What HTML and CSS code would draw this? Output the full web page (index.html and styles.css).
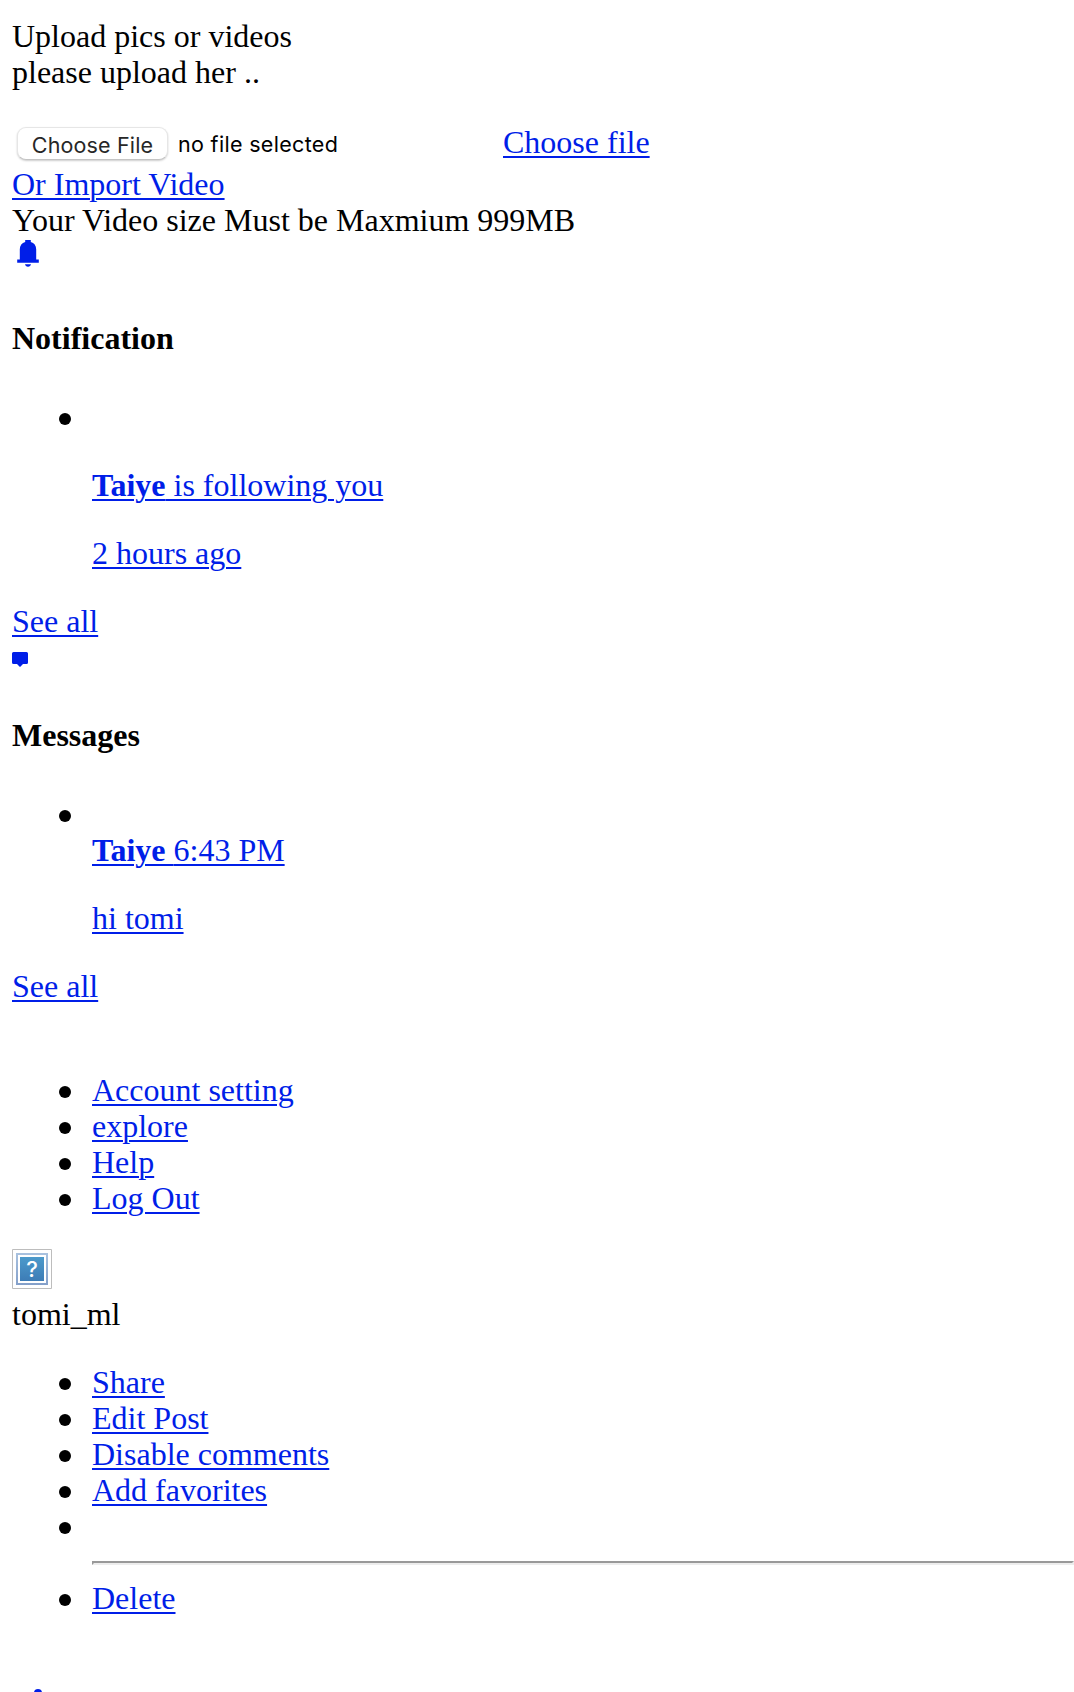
FILE: index.html
```html
<!DOCTYPE html>
<html lang="en">
<head>
<meta charset="utf-8">
<title>Upload</title>
<link rel="stylesheet" href="styles.css">
</head>
<body>
<main class="page">
  <div>Upload pics or videos</div>
  <div>please upload her ..</div>
  <div class="upload-row">
    <button class="file-button" type="button">Choose File</button>
    <span class="file-status">no file selected</span>
    <a class="choose-link" href="#">Choose file</a>
  </div>
  <div><a href="#">Or Import Video</a></div>
  <div>Your Video size Must be Maxmium 999MB</div>
  <a class="icon-link bell-link" href="#" aria-label="Notifications">
    <svg class="bell" viewBox="0 0 22 27"><path d="M8.200 0h5.600v2c3.300 1 5.400 3.500 5.400 7.200v10.200h2.600v3.400H.2v-3.400h2.600V9.200C2.800 5.500 4.900 3 8.200 2zM8 24.300h6c-.3 1.500-1.400 2.400-3 2.400s-2.700-.9-3-2.400z"/></svg>
  </a>
  <h4>Notification</h4>
  <ul>
    <li>
      <a href="#"><p><b>Taiye</b> is following you</p><p>2 hours ago</p></a>
    </li>
  </ul>
  <div><a href="#">See all</a></div>
  <a class="icon-link message-link" href="#" aria-label="Messages">
    <svg class="message" viewBox="0 0 16 15"><path d="M1.500 0h13Q16 0 16 1.500v9Q16 12 14.500 12H11L8 15 5 12H1.500Q0 12 0 10.500v-9Q0 0 1.500 0z"/></svg>
  </a>
  <h4>Messages</h4>
  <ul>
    <li>
      <a href="#"><span class="message-head"><b>Taiye </b>6:43 PM</span><p>hi tomi</p></a>
    </li>
  </ul>
  <div><a href="#">See all</a></div>
  <ul class="account-menu">
    <li><a href="#">Account setting</a></li>
    <li><a href="#">explore</a></li>
    <li><a href="#">Help</a></li>
    <li><a href="#">Log Out</a></li>
  </ul>
  <svg class="avatar" viewBox="0 0 40 40">
    <defs>
      <linearGradient id="edge" x2="0" y2="1"><stop stop-color="#a9c2df"/><stop offset="1" stop-color="#839fc9"/></linearGradient>
      <linearGradient id="fill" x2="0" y2="1"><stop stop-color="#4c9acb"/><stop offset="1" stop-color="#3d7cb6"/></linearGradient>
    </defs>
    <path class="avatar-frame" d="M.5.5h39v39H.5z"/>
    <path fill="url(#edge)" d="M4 4h32v32H4z"/>
    <path fill="#fff" d="M6 6h28v28H6z"/>
    <path fill="url(#fill)" d="M8 8h24v24H8z"/>
    <text class="avatar-mark" x="20" y="28" text-anchor="middle">?</text>
  </svg>
  <div class="username">tomi_ml</div>
  <ul>
    <li><a href="#">Share</a></li>
    <li><a href="#">Edit Post</a></li>
    <li><a href="#">Disable comments</a></li>
    <li><a href="#">Add favorites</a></li>
    <li><hr></li>
    <li><a href="#">Delete</a></li>
  </ul>
  <a class="icon-link like-link" href="#" aria-label="Like">
    <svg class="like" viewBox="0 0 8 8"><circle cx="4" cy="4" r="4"/></svg>
  </a>
</main>
</body>
</html>
```
FILE: styles.css
```css
html {
  overflow: hidden;
}

body {
  margin: 0;
  height: 1692px;
  overflow: hidden;
  background: #fff;
  color: #000;
  font: 32px/36px "Liberation Serif", "Times New Roman", serif;
}

.page {
  padding: 18px 0 0 12px;
}

a {
  color: #001ee8;
  text-decoration-thickness: 2px;
  text-underline-offset: 3px;
}

h4 {
  margin: 42px 0 43px;
  font-size: 32px;
}

p {
  margin: 32px 0;
}

ul {
  margin: 32px 0;
  padding: 0 0 0 80px;
  list-style: none;
}

li::before {
  content: "";
  display: inline-block;
  width: 12px;
  height: 12px;
  margin: 0 21px 0 -33px;
  border-radius: 50%;
  background: #000;
  vertical-align: 3px;
}

.upload-row {
  display: flex;
  align-items: flex-start;
  height: 42px;
  margin-top: 34px;
}

.file-button {
  width: 151px;
  height: 33px;
  margin: 3px 0 0 5px;
  padding: 2px 0 0;
  border: 1px solid #e6e6e6;
  border-bottom-color: #c4c4c4;
  border-radius: 9px;
  background: #fff;
  box-shadow: 0 1px 2px rgba(0, 0, 0, 0.2);
  color: #272727;
  font: 21.500px/28px Inter, sans-serif;
  letter-spacing: 0.15px;
  white-space: nowrap;
}

.file-status {
  width: 325px;
  margin-left: 10px;
  padding-top: 2px;
  font: 21.500px/36px Inter, sans-serif;
  letter-spacing: 0.32px;
}

.icon-link {
  display: block;
  fill: #001ee8;
}

.icon-link svg {
  display: block;
}

.bell-link {
  height: 40px;
  padding: 2px 0 0 5px;
  box-sizing: border-box;
}

.bell {
  width: 22px;
  height: 27px;
}

.message-link {
  height: 36px;
  padding-top: 13px;
  box-sizing: border-box;
}

.message {
  width: 16px;
  height: 15px;
}

.message-head {
  display: block;
}

.account-menu {
  margin-top: 68px;
}

.avatar {
  display: block;
  width: 40px;
  height: 40px;
  margin-top: 33px;
}

.avatar-frame {
  fill: #fff;
  stroke: #bdbdbd;
}

.avatar-mark {
  fill: #fff;
  font: 500 22px Inter, sans-serif;
}

.username {
  margin-top: 7px;
}

hr {
  height: 0;
  margin: 17px 0 15px;
  border: 2px solid;
  border-color: #999 #ededed #ededed #999;
}

.like-link {
  padding: 41px 0 0 22px;
}

.like {
  width: 8px;
  height: 8px;
}
```
